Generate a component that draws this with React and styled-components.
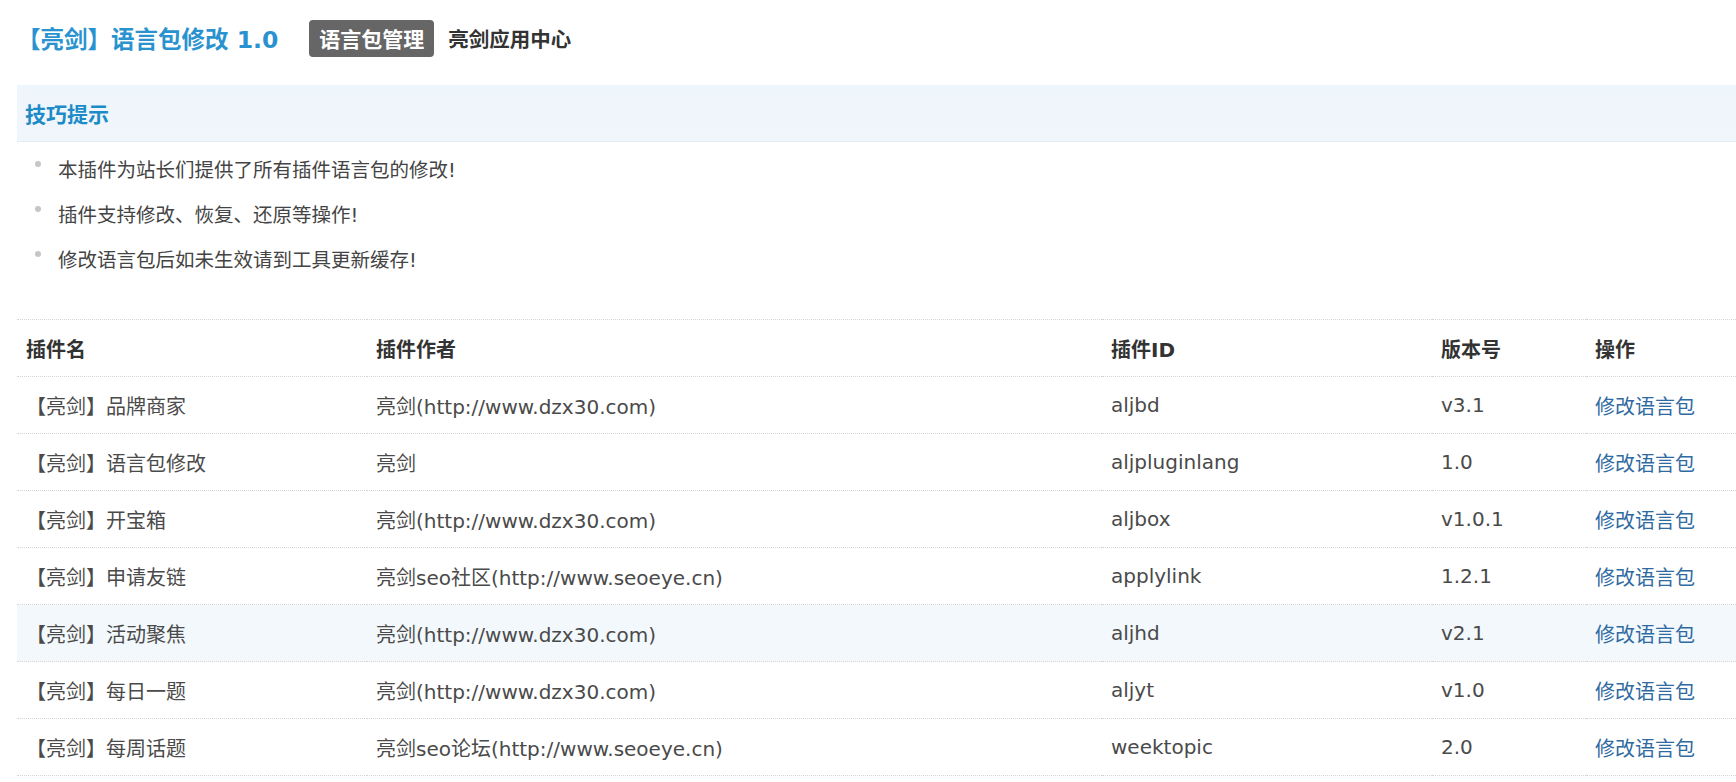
import styled, { createGlobalStyle } from "styled-components";

const GlobalStyle = createGlobalStyle`
  body {
    margin: 0;
    background: #fff;
    font-family: "DejaVu Sans", "Noto Sans CJK SC", sans-serif;
    color: #444;
  }
`;

const Page = styled.div`
  padding-left: 17px;
`;

const Header = styled.div`
  display: flex;
  align-items: center;
  height: 40px;
  padding-top: 18px;
  margin-bottom: 27px;
`;

const Title = styled.h1`
  margin: 0 31px 0 0;
  font-size: 23.5px;
  font-weight: bold;
  color: #2a93cf;
  white-space: nowrap;
`;

const NavItem = styled.a`
  display: inline-flex;
  align-items: center;
  height: 37px;
  padding: 0 ${(p) => (p.$active ? "10px" : "8px")};
  margin-right: 6px;
  border-radius: 4px;
  font-size: ${(p) => (p.$active ? "21px" : "20.5px")};
  font-weight: bold;
  text-decoration: none;
  color: ${(p) => (p.$active ? "#fff" : "#333")};
  background: ${(p) => (p.$active ? "#666" : "transparent")};
`;

const TipsBar = styled.div`
  display: flex;
  align-items: center;
  height: 56px;
  padding-left: 8px;
  background: linear-gradient(180deg, #eef5fc 0%, #f1f6fb 100%);
  border-bottom: 1px dotted #dbe6f0;
  font-size: 21px;
  font-weight: bold;
  color: #1d8cc6;
`;

const TipsList = styled.ul`
  list-style: none;
  margin: 0;
  padding: 4px 0 0 18px;
  height: 173px;
`;

const Tip = styled.li`
  display: flex;
  align-items: center;
  height: 45px;
  font-size: 19.5px;
  color: #444;

  &::before {
    content: "";
    width: 6px;
    height: 6px;
    margin-right: 17px;
    border-radius: 50%;
    background: #c6c6c6;
    transform: translateY(-5px);
  }
`;

const Table = styled.table`
  width: 100%;
  border-collapse: collapse;
  table-layout: fixed;
  font-size: 20px;
`;

const Row = styled.tr`
  height: 57px;
  border-bottom: 1px dotted #d6d6d6;
  background: ${(p) => (p.$hover ? "#f2f8fc" : "transparent")};
`;

const HeadRow = styled(Row)`
  border-top: 1px dotted #d6d6d6;
`;

const Th = styled.th`
  box-sizing: border-box;
  width: ${(p) => p.$w || "auto"};
  padding: 0 9px;
  text-align: left;
  font-weight: bold;
  color: #333;
`;

const Td = styled.td`
  padding: 0 9px;
  color: #4a4a4a;
  white-space: nowrap;
`;

const EditLink = styled.a`
  color: #2f6aa1;
  text-decoration: none;
`;

const plugins = [
  { name: "【亮剑】品牌商家", author: "亮剑(http://www.dzx30.com)", id: "aljbd", version: "v3.1" },
  { name: "【亮剑】语言包修改", author: "亮剑", id: "aljpluginlang", version: "1.0" },
  { name: "【亮剑】开宝箱", author: "亮剑(http://www.dzx30.com)", id: "aljbox", version: "v1.0.1" },
  { name: "【亮剑】申请友链", author: "亮剑seo社区(http://www.seoeye.cn)", id: "applylink", version: "1.2.1" },
  { name: "【亮剑】活动聚焦", author: "亮剑(http://www.dzx30.com)", id: "aljhd", version: "v2.1", hover: true },
  { name: "【亮剑】每日一题", author: "亮剑(http://www.dzx30.com)", id: "aljyt", version: "v1.0" },
  { name: "【亮剑】每周话题", author: "亮剑seo论坛(http://www.seoeye.cn)", id: "weektopic", version: "2.0" },
];

const tips = [
  "本插件为站长们提供了所有插件语言包的修改!",
  "插件支持修改、恢复、还原等操作!",
  "修改语言包后如未生效请到工具更新缓存!",
];

export default function App() {
  return (
    <Page>
      <GlobalStyle />
      <Header>
        <Title>【亮剑】语言包修改 1.0</Title>
        <NavItem href="#" $active>语言包管理</NavItem>
        <NavItem href="#">亮剑应用中心</NavItem>
      </Header>

      <TipsBar>技巧提示</TipsBar>
      <TipsList>
        {tips.map((t) => (
          <Tip key={t}>{t}</Tip>
        ))}
      </TipsList>

      <Table>
        <thead>
          <HeadRow>
            <Th $w="350px">插件名</Th>
            <Th $w="735px">插件作者</Th>
            <Th $w="330px">插件ID</Th>
            <Th $w="154px">版本号</Th>
            <Th>操作</Th>
          </HeadRow>
        </thead>
        <tbody>
          {plugins.map((p) => (
            <Row key={p.id} $hover={p.hover}>
              <Td>{p.name}</Td>
              <Td>{p.author}</Td>
              <Td>{p.id}</Td>
              <Td>{p.version}</Td>
              <Td>
                <EditLink href="#">修改语言包</EditLink>
              </Td>
            </Row>
          ))}
        </tbody>
      </Table>
    </Page>
  );
}
